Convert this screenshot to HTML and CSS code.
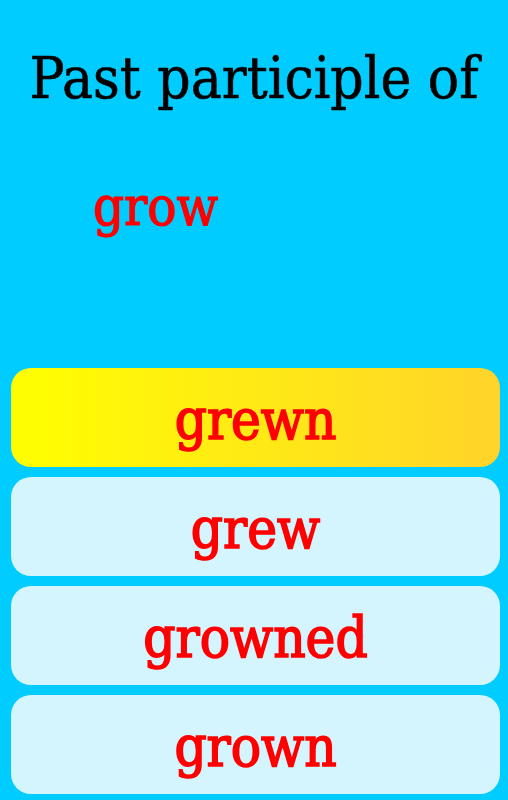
FILE: index.html
```html
<!DOCTYPE html>
<html>
<head>
<meta charset="utf-8">
<link rel="stylesheet" href="styles.css">
</head>
<body>
<div class="screen">
  <h1 class="title">Past participle of</h1>
  <div class="word">grow</div>
  <div class="options">
    <div class="option selected">grewn</div>
    <div class="option">grew</div>
    <div class="option">growned</div>
    <div class="option">grown</div>
  </div>
</div>
</body>
</html>
```
FILE: styles.css
```css
html, body {
  margin: 0;
  padding: 0;
  background: #00ccff;
}
.screen {
  width: 508px;
  height: 800px;
  display: flex;
  flex-direction: column;
  font-family: "DejaVu Serif Condensed", "DejaVu Serif", serif;
  font-stretch: condensed;
}
.title {
  margin: 0;
  padding-top: 40px;
  height: 76px;
  line-height: 76px;
  font-size: 58px;
  font-weight: normal;
  color: #000;
  text-align: center;
  -webkit-text-stroke: 0.6px #000;
}
.word {
  margin-top: 56px;
  padding-left: 93px;
  height: 70px;
  line-height: 70px;
  font-size: 54px;
  color: #ff0000;
  -webkit-text-stroke: 1.2px #ff0000;
}
.options {
  margin-top: 126px;
  padding: 0 8px 0 11px;
  display: flex;
  flex-direction: column;
  gap: 10px;
}
.option {
  height: 99px;
  border-radius: 20px;
  background: #d4f5fd;
  color: #ff0000;
  font-size: 56px;
  font-weight: normal;
  -webkit-text-stroke: 1.6px #ff0000;
  display: flex;
  align-items: center;
  justify-content: center;
  padding-top: 4px;
  box-sizing: border-box;
}
.option.selected {
  background: linear-gradient(to right, #ffff00, #ffd42a);
}
```
